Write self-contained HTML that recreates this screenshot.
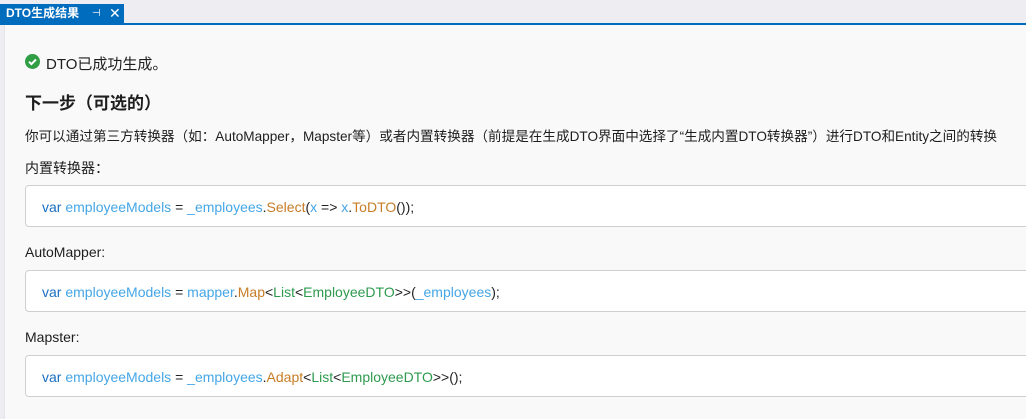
<!DOCTYPE html><html><head><meta charset="utf-8"><style>
body{margin:0;width:1026px;height:419px;overflow:hidden;background:#eeeef2;font-family:"Liberation Sans","Noto Sans CJK SC",sans-serif;position:relative}
.tab{position:absolute;left:0;top:4px;width:124px;height:19px;background:#006cbe;color:#fff;font-size:12px;font-weight:bold;line-height:19px}
.line{position:absolute;left:0;top:23px;width:1026px;height:2px;background:#006cbe}
.content{position:absolute;left:4px;top:25px;width:1022px;height:394px;background:#f9f9f9;border-left:1px solid #e4e4e8}
.t{position:absolute;left:25px;font-size:14px;color:#1e1e1e;white-space:nowrap}
.box{position:absolute;left:25px;width:1010px;height:42px;background:#fff;border:1px solid #cfcfcf;border-radius:4px;box-sizing:border-box;font-size:14px;line-height:42px;padding-left:16px;white-space:nowrap}
.k{color:#1a6fc0}.i{color:#45a6e6}.m{color:#c77d26}.g{color:#2e9a4e}.p{color:#222}
</style></head><body>
<div class="tab"><span style="margin-left:6px">DTO生成结果</span><span style="position:absolute;left:92px;top:0;font-weight:normal;font-size:10px">⊣</span><span style="position:absolute;left:109px;top:0;font-weight:normal;font-size:14px">✕</span></div>
<div class="line"></div>
<div class="content"></div>
<svg style="position:absolute;left:25px;top:54px" width="15" height="15"><circle cx="7.5" cy="7.5" r="7.5" fill="#2f9e44"/><path d="M4 7.7l2.4 2.4 4.6-4.6" stroke="#fff" stroke-width="2" fill="none"/></svg>
<div class="t" style="left:46px;top:53px;font-size:15px">DTO已成功生成。</div>
<div class="t" style="top:89px;font-size:17px;font-weight:bold">下一步（可选的）</div>
<div class="t" style="top:125px;font-size:13.6px">你可以通过第三方转换器（如：AutoMapper，Mapster等）或者内置转换器（前提是在生成DTO界面中选择了“生成内置DTO转换器”）进行DTO和Entity之间的转换</div>
<div class="t" style="top:158px">内置转换器：</div>
<div class="box" style="top:185px"><span class="k">var</span> <span class="i">employeeModels</span> <span class="p">=</span> <span class="i">_employees</span><span class="p">.</span><span class="m">Select</span><span class="p">(</span><span class="i">x</span> <span class="p">=&gt;</span> <span class="i">x</span><span class="p">.</span><span class="m">ToDTO</span><span class="p">());</span></div>
<div class="t" style="top:244px">AutoMapper:</div>
<div class="box" style="top:270px"><span class="k">var</span> <span class="i">employeeModels</span> <span class="p">=</span> <span class="i">mapper</span><span class="p">.</span><span class="m">Map</span><span class="p">&lt;</span><span class="g">List</span><span class="p">&lt;</span><span class="g">EmployeeDTO</span><span class="p">&gt;&gt;(</span><span class="i">_employees</span><span class="p">);</span></div>
<div class="t" style="top:329px">Mapster:</div>
<div class="box" style="top:355px"><span class="k">var</span> <span class="i">employeeModels</span> <span class="p">=</span> <span class="i">_employees</span><span class="p">.</span><span class="m">Adapt</span><span class="p">&lt;</span><span class="g">List</span><span class="p">&lt;</span><span class="g">EmployeeDTO</span><span class="p">&gt;&gt;();</span></div>
</body></html>
